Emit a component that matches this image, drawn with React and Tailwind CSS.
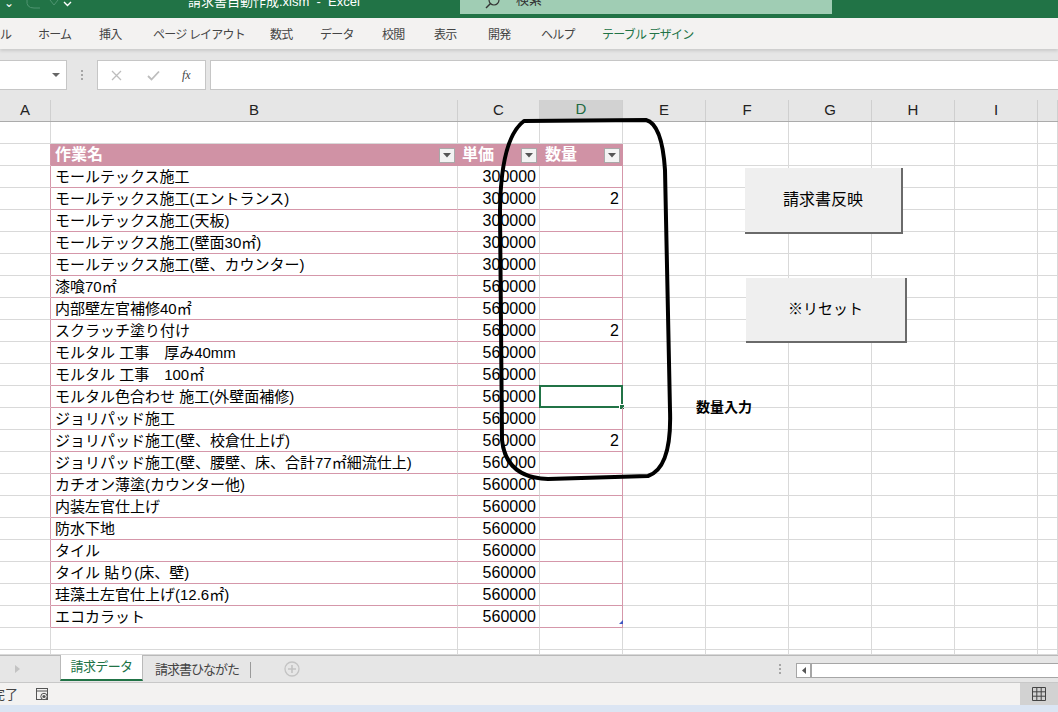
/**
 * App.jsx — Excel sheet (請求データ) recreation.
 */
const JP = "font-['Liberation_Sans','Noto_Sans_CJK_JP',sans-serif]";

const ROWS = [
  ["モールテックス施工", 300000, ""],
  ["モールテックス施工(エントランス)", 300000, 2],
  ["モールテックス施工(天板)", 300000, ""],
  ["モールテックス施工(壁面30㎡)", 300000, ""],
  ["モールテックス施工(壁、カウンター)", 300000, ""],
  ["漆喰70㎡", 560000, ""],
  ["内部壁左官補修40㎡", 560000, ""],
  ["スクラッチ塗り付け", 560000, 2],
  ["モルタル 工事　厚み40mm", 560000, ""],
  ["モルタル 工事　100㎡", 560000, ""],
  ["モルタル色合わせ 施工(外壁面補修)", 560000, ""],
  ["ジョリパッド施工", 560000, ""],
  ["ジョリパッド施工(壁、校倉仕上げ)", 560000, 2],
  ["ジョリパッド施工(壁、腰壁、床、合計77㎡細流仕上)", 560000, ""],
  ["カチオン薄塗(カウンター他)", 560000, ""],
  ["内装左官仕上げ", 560000, ""],
  ["防水下地", 560000, ""],
  ["タイル", 560000, ""],
  ["タイル 貼り(床、壁)", 560000, ""],
  ["珪藻土左官仕上げ(12.6㎡)", 560000, ""],
  ["エコカラット", 560000, ""],
];

const GRID =
  "grid grid-cols-[51px_407px_82px_83px_83px_83px_83px_83px_83px_20px]";

const TABS = [
  ["ル", 0],
  ["ホーム", 38],
  ["挿入", 99],
  ["ページ レイアウト", 153],
  ["数式", 270],
  ["データ", 320],
  ["校閲", 382],
  ["表示", 434],
  ["開発", 488],
  ["ヘルプ", 541],
];

function FilterBtn() {
  return (
    <span className="absolute right-[2px] top-[4px] w-[16px] h-[15px] bg-[#f3f3f3] border border-[#a9a9a9] flex items-center justify-center">
      <svg width="8" height="5" viewBox="0 0 8 5">
        <path d="M0 0 L8 0 L4 4.5 Z" fill="#555" />
      </svg>
    </span>
  );
}

function Cell({ className = "", children }) {
  return (
    <div
      className={`h-[22px] border-r border-b border-[#d9d9d9] overflow-visible whitespace-nowrap relative ${className}`}
    >
      {children}
    </div>
  );
}

function BlankRow({ h = "h-[22px]" }) {
  return (
    <div className={GRID}>
      {Array.from({ length: 10 }).map((_, i) => (
        <div key={i} className={`${h} border-r border-b border-[#d9d9d9]`} />
      ))}
    </div>
  );
}

function TableRow({ name, price, qty, selected }) {
  const pink = "border-b-[#d597aa]";
  return (
    <div className={GRID}>
      <Cell className="border-r-[#d597aa]" />
      <Cell className={`${pink} pl-[4px] text-[15px] leading-[22px] text-black`}>
        {name}
      </Cell>
      <Cell className={`${pink} text-right pr-[3px] text-[16px] leading-[22px] text-black`}>
        {price}
      </Cell>
      <Cell className={`${pink} border-r-[#d597aa] text-right pr-[3px] text-[16px] leading-[22px] text-black`}>
        {qty}
        {selected && (
          <span className="absolute -left-[1px] -top-[1px] w-[84px] h-[23px] border-2 border-[#217346]">
            <span className="absolute -right-[4px] -bottom-[4px] w-[6px] h-[6px] bg-[#217346] border border-white" />
          </span>
        )}
      </Cell>
      {Array.from({ length: 6 }).map((_, i) => (
        <Cell key={i} />
      ))}
    </div>
  );
}

export default function App() {
  return (
    <div className={`w-[1058px] h-[712px] overflow-hidden bg-white flex flex-col ${JP}`}>
      {/* ── Title bar ─────────────────────────────────────────── */}
      <div className="h-[18px] bg-[#217346] relative shrink-0 overflow-hidden">
        <span className="absolute left-[4px] -top-[6px] text-white text-[12px]">⌄</span>
        <svg className="absolute left-[24px] -top-[2px]" width="40" height="14" viewBox="0 0 40 14">
          <path d="M3 2 Q2 10 10 10 L16 10" stroke="#4f9470" strokeWidth="1" fill="none" />
          <path d="M26 2 L30 7 L34 2" stroke="#4f9470" strokeWidth="1" fill="none" />
        </svg>
        <svg className="absolute left-[63px] top-[1px]" width="9" height="6" viewBox="0 0 9 6">
          <path d="M1 1 L4.5 4.5 L8 1" stroke="white" strokeWidth="1.4" fill="none" />
        </svg>
        <span className="absolute left-[188px] -top-[8px] text-white text-[13px] leading-[20px] whitespace-nowrap">
          請求書自動作成.xlsm&nbsp;&nbsp;-&nbsp;&nbsp;Excel
        </span>
        <div className="absolute left-[460px] top-0 w-[372px] h-[14px] bg-[#a0cdb4] overflow-hidden">
          <svg className="absolute left-[25px] -top-[6px]" width="16" height="16" viewBox="0 0 16 16">
            <circle cx="9" cy="6" r="5" stroke="#333" strokeWidth="1.2" fill="none" />
            <path d="M5.5 9.5 L1 14" stroke="#333" strokeWidth="1.4" />
          </svg>
          <span className="absolute left-[56px] -top-[10px] text-[13px] leading-[20px] text-[#333]">検索</span>
        </div>
      </div>

      {/* ── Ribbon tabs ──────────────────────────────────────── */}
      <div className="h-[31px] bg-[#f3f2f1] relative shrink-0 shadow-[0_2px_3px_rgba(0,0,0,0.12)] z-10">
        {TABS.map(([t, x]) => (
          <span
            key={t}
            className="absolute top-[8px] text-[12px] tracking-[-0.8px] text-[#444] whitespace-nowrap"
            style={{ left: x }}
          >
            {t}
          </span>
        ))}
        <span className="absolute left-[602px] top-[8px] text-[12px] tracking-[-0.8px] text-[#217346] whitespace-nowrap">
          テーブル デザイン
        </span>
      </div>

      {/* ── Formula bar ──────────────────────────────────────── */}
      <div className="h-[51px] bg-[#e6e6e6] shrink-0 flex items-start pt-[11px]">
        <div className="w-[67px] h-[30px] bg-white border border-[#c6c6c6] border-l-0 relative">
          <svg className="absolute left-[52px] top-[12px]" width="8" height="5" viewBox="0 0 8 5">
            <path d="M0 0 L8 0 L4 4 Z" fill="#666" />
          </svg>
        </div>
        <div className="w-[30px] h-[30px] flex flex-col items-center justify-center gap-[2px]">
          <span className="w-[2px] h-[2px] bg-[#a6a6a6]" />
          <span className="w-[2px] h-[2px] bg-[#a6a6a6]" />
          <span className="w-[2px] h-[2px] bg-[#a6a6a6]" />
        </div>
        <div className="w-[109px] h-[30px] bg-white border border-[#c6c6c6] flex items-center">
          <svg className="ml-[13px]" width="11" height="11" viewBox="0 0 11 11">
            <path d="M1 1 L10 10 M10 1 L1 10" stroke="#bdbdbd" strokeWidth="1.3" />
          </svg>
          <svg className="ml-[25px]" width="13" height="11" viewBox="0 0 13 11">
            <path d="M1 6 L4.5 9.5 L12 1.5" stroke="#bdbdbd" strokeWidth="1.8" fill="none" />
          </svg>
          <span className="ml-[22px] text-[12px] italic font-['Liberation_Serif',serif] text-[#444]">fx</span>
        </div>
        <div className="ml-[4px] flex-1 h-[30px] bg-white border border-[#c6c6c6] border-r-0" />
      </div>

      {/* ── Sheet ────────────────────────────────────────────── */}
      <div className="relative flex-1 overflow-hidden">
        {/* column headers */}
        <div className={`${GRID} h-[22px] bg-[#e6e6e6] border-b border-[#ababab] text-[15px] text-[#222] font-['Liberation_Sans',sans-serif]`}>
          {["A", "B", "C", "D", "E", "F", "G", "H", "I", ""].map((c, i) => (
            <div
              key={i}
              className={`h-[21px] flex items-center justify-center border-r border-[#cfcfcf] ${
                c === "D" ? "bg-[#d2d2d2] text-[#1e6b41] border-b-2 border-b-[#217346]" : ""
              }`}
            >
              {c}
            </div>
          ))}
        </div>

        <BlankRow />

        {/* table header */}
        <div className={GRID}>
          <Cell className="border-r-[#d597aa]" />
          <Cell className="bg-[#d092a5] border-[#d092a5] text-white font-bold text-[16px] leading-[22px] pl-[4px]">
            作業名
            <FilterBtn />
          </Cell>
          <Cell className="bg-[#d092a5] border-[#d092a5] text-white font-bold text-[16px] leading-[22px] pl-[4px]">
            単価
            <FilterBtn />
          </Cell>
          <Cell className="bg-[#d092a5] border-[#d092a5] text-white font-bold text-[16px] leading-[22px] pl-[5px]">
            数量
            <FilterBtn />
          </Cell>
          {Array.from({ length: 6 }).map((_, i) => (
            <Cell key={i} />
          ))}
        </div>

        {ROWS.map(([n, p, q], i) => (
          <TableRow key={i} name={n} price={p} qty={q} selected={i === 10} />
        ))}

        <BlankRow />
        <BlankRow h="h-[5px]" />

        {/* table resize handle */}
        <svg className="absolute left-[619px] top-[520px]" width="4" height="4" viewBox="0 0 4 4">
          <path d="M4 0 L4 4 L0 4 Z" fill="#4057c2" />
        </svg>

        {/* form buttons */}
        <div className="absolute left-[745px] top-[68px] w-[158px] h-[66px] bg-[#efefef] border-r-2 border-b-2 border-[#6a6a6a] flex items-center justify-center text-[16px] text-black">
          請求書反映
        </div>
        <div className="absolute left-[746px] top-[178px] w-[161px] h-[65px] bg-[#efefef] border-r-2 border-b-2 border-[#6a6a6a] flex items-center justify-center text-[15px] text-black">
          ※リセット
        </div>
        <span className="absolute left-[696px] top-[297px] text-[14px] font-bold text-black whitespace-nowrap">
          数量入力
        </span>

        {/* hand-drawn loop */}
        <svg className="absolute left-0 top-0 pointer-events-none" width="1058" height="560" viewBox="0 0 1058 560">
          <path
            d="M524 21 L646 20 Q662 24 665 70 L670 310 Q672 368 648 376 L548 379 Q506 378 502 340 L500 110 Q501 38 524 21 Z"
            stroke="#000"
            strokeWidth="4"
            fill="none"
            strokeLinejoin="round"
          />
        </svg>
      </div>

      {/* ── Sheet tabs ───────────────────────────────────────── */}
      <div className="h-[27px] bg-[#e6e6e6] border-t border-[#b9b9b9] shrink-0 relative">
        <svg className="absolute left-[15px] top-[9px]" width="5" height="8" viewBox="0 0 5 8">
          <path d="M0 0 L5 4 L0 8 Z" fill="#c3c3c3" />
        </svg>
        <div className="absolute left-[60px] -top-[1px] w-[83px] h-[26px] bg-white border-x border-[#b9b9b9] border-b-2 border-b-[#217346] flex items-center justify-center text-[13px] tracking-[-0.6px] text-[#217346]">
          請求データ
        </div>
        <span className="absolute left-[155px] top-[4px] text-[13px] tracking-[-1px] text-[#444] whitespace-nowrap">
          請求書ひながた
        </span>
        <span className="absolute left-[250px] top-[6px] w-px h-[16px] bg-[#9a9a9a]" />
        <svg className="absolute left-[284px] top-[5px]" width="16" height="16" viewBox="0 0 16 16">
          <circle cx="8" cy="8" r="7" stroke="#c3c3c3" strokeWidth="1.3" fill="none" />
          <path d="M8 4 V12 M4 8 H12" stroke="#c3c3c3" strokeWidth="1.6" />
        </svg>
        <div className="absolute left-[779px] top-[8px] flex flex-col gap-[2px]">
          <span className="w-[2px] h-[2px] bg-[#a6a6a6]" />
          <span className="w-[2px] h-[2px] bg-[#a6a6a6]" />
          <span className="w-[2px] h-[2px] bg-[#a6a6a6]" />
        </div>
        <div className="absolute left-[796px] top-[7px] w-[262px] h-[15px] bg-white border border-[#a6a6a6] border-r-0 flex">
          <div className="w-[15px] h-full border-r-2 border-[#a6a6a6] flex items-center justify-center">
            <svg width="4" height="7" viewBox="0 0 4 7">
              <path d="M4 0 L0 3.5 L4 7 Z" fill="#555" />
            </svg>
          </div>
        </div>
      </div>

      {/* ── Status bar ───────────────────────────────────────── */}
      <div className="h-[23px] bg-[#f3f2f1] border-t border-[#c8c8c8] shrink-0 relative">
        <span className="absolute -left-[8px] top-[2px] text-[13px] text-[#444]">完了</span>
        <svg className="absolute left-[36px] top-[5px]" width="13" height="13" viewBox="0 0 13 13">
          <rect x="0.5" y="0.5" width="11" height="11" fill="none" stroke="#555" />
          <path d="M0.5 3 H11.5" stroke="#555" />
          <circle cx="8" cy="8.5" r="3.2" fill="#f3f2f1" stroke="#555" />
          <circle cx="8" cy="8.5" r="1.6" fill="#555" />
        </svg>
        <div className="absolute left-[1020px] top-0 w-[38px] h-[22px] bg-[#d2d2d2] flex items-center justify-center">
          <svg width="14" height="14" viewBox="0 0 14 14">
            <path d="M0.5 0.5 H13.5 V13.5 H0.5 Z M0.5 4.8 H13.5 M0.5 9.2 H13.5 M4.8 0.5 V13.5 M9.2 0.5 V13.5" stroke="#444" fill="none" />
          </svg>
        </div>
      </div>
      <div className="h-[7px] bg-[#dbe5f3] shrink-0" />
    </div>
  );
}
